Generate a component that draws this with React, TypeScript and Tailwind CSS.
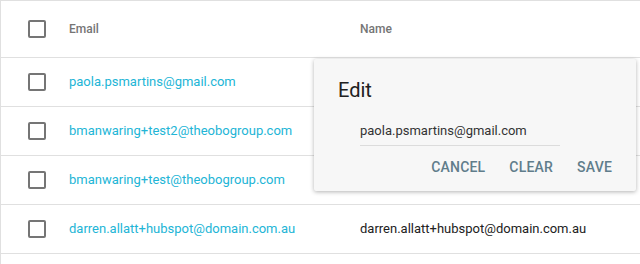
const rows = [
  { email: 'paola.psmartins@gmail.com', name: '' },
  { email: 'bmanwaring+test2@theobogroup.com', name: '' },
  { email: 'bmanwaring+test@theobogroup.com', name: '' },
  { email: 'darren.allatt+hubspot@domain.com.au', name: 'darren.allatt+hubspot@domain.com.au' },
  { email: '', name: '' },
]

function Checkbox() {
  return <span className="block h-[18px] w-[18px] rounded-[2px] border-2 border-[#757575]" />
}

export default function App() {
  return (
    <div className="relative h-[264px] w-[640px] overflow-hidden bg-white font-['Roboto',sans-serif]">
      <div className="border-l border-t border-[#e0e0e0]">
        <div className="grid h-[57px] grid-cols-[68px_291px_1fr] items-center border-b border-[#e0e0e0] text-[12px] font-medium text-[#757575]">
          <div className="pl-[27px]">
            <Checkbox />
          </div>
          <div>Email</div>
          <div>Name</div>
        </div>
        {rows.map((row, i) => (
          <div
            key={i}
            className="grid h-[49px] grid-cols-[68px_291px_1fr] items-center border-b border-[#e0e0e0] text-[13px]"
          >
            <div className="pl-[27px]">{row.email && <Checkbox />}</div>
            <div className="text-[#22b5d6]">{row.email}</div>
            <div className="text-[#212121]">{row.name}</div>
          </div>
        ))}
      </div>

      <div className="absolute left-[314px] top-[59px] h-[132px] w-[322px] rounded-[2px] bg-[#f7f7f7] shadow-[0_1px_4px_rgba(0,0,0,0.3)]">
        <div className="pl-[24px] pt-[19px] text-[20px] leading-[24px] text-[#212121]">Edit</div>
        <div className="ml-[46px] mt-[20px] w-[200px] border-b border-[#dcdcdc] pb-[5px] text-[13px] leading-[18px] text-[#333]">
          paola.psmartins@gmail.com
        </div>
        <div className="mt-[13px] flex justify-end gap-[24px] pr-[24px] text-[14px] font-medium leading-[16px] tracking-[0.2px] text-[#607d8b]">
          <span>CANCEL</span>
          <span>CLEAR</span>
          <span>SAVE</span>
        </div>
      </div>
    </div>
  )
}
